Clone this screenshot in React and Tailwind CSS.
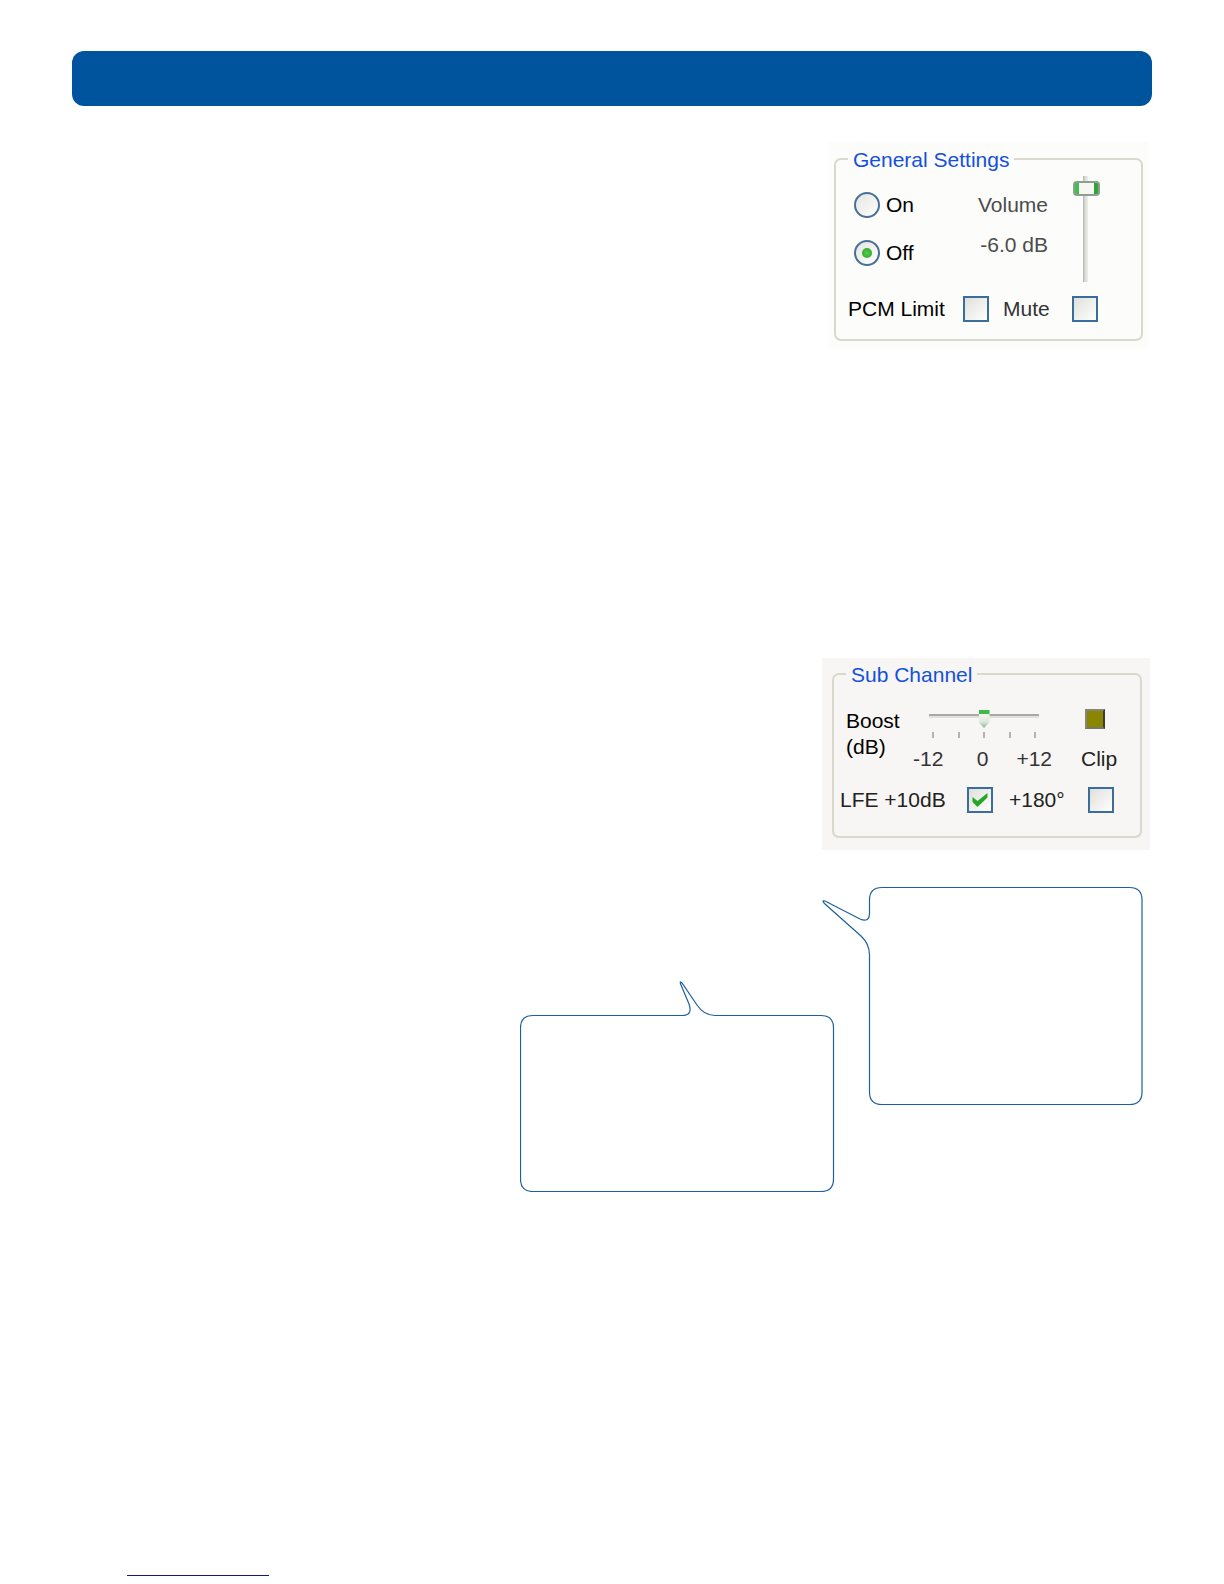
import { useState } from "react";

const TICKS = ["-12", "-6", "0", "+6", "+12"];

function GroupBox({ title, className, children }) {
  return (
    <fieldset className={`min-w-0 rounded-[7px] border-2 border-[#dad8cd] ${className}`}>
      <legend className="ml-[12px] px-[5px] pt-[2px] leading-6 text-[#1450dc]">{title}</legend>
      {children}
    </fieldset>
  );
}

function Radio({ id, label, checked, onChange }) {
  return (
    <div className="flex h-6 items-center gap-[6px]">
      <span className="grid place-items-center">
        <input
          id={id}
          type="radio"
          name="power"
          checked={checked}
          onChange={onChange}
          className="peer col-start-1 row-start-1 size-[26px] appearance-none rounded-full border-2 border-[#47709b] bg-linear-to-br from-[#e4e4df] to-white"
        />
        <span className="pointer-events-none col-start-1 row-start-1 hidden size-[10px] rounded-full bg-radial from-[#4fd04a] to-[#2a9c2a] peer-checked:block" />
      </span>
      <label htmlFor={id}>{label}</label>
    </div>
  );
}

function CheckBox({ id, checked, onChange }) {
  return (
    <span className="grid size-[26px] place-items-center">
      <input
        id={id}
        type="checkbox"
        checked={checked}
        onChange={onChange}
        className="peer col-start-1 row-start-1 size-[26px] appearance-none border-2 border-[#3a6c9c] bg-linear-to-br from-[#dfdfda] to-white"
      />
      <svg
        viewBox="0 0 16 16"
        className="pointer-events-none col-start-1 row-start-1 hidden size-4 peer-checked:block"
        aria-hidden
      >
        <path d="M0.5 5 L5.5 9 L15.5 1 V5.5 L5.5 15 L0.5 10 Z" fill="#27a527" />
      </svg>
    </span>
  );
}

function GeneralSettings() {
  const [power, setPower] = useState("off");
  const [volume, setVolume] = useState(95);
  const [limit, setLimit] = useState(false);
  const [mute, setMute] = useState(false);

  return (
    <section className="mr-[3px] w-[321px] bg-[#fcfcfb] px-[6px] pt-[4px] pb-[7px]">
      <GroupBox title="General Settings" className="pb-[17px]">
        <div className="flex pt-[4px] pr-[41px] pl-[18px]">
          <div className="flex flex-col gap-6 pt-[17px]">
            <Radio id="on" label="On" checked={power === "on"} onChange={() => setPower("on")} />
            <Radio id="off" label="Off" checked={power === "off"} onChange={() => setPower("off")} />
          </div>
          <div className="ml-auto flex flex-col gap-4 pt-[17px] text-right text-[#4c4c4c]">
            <label htmlFor="volume">Volume</label>
            <output htmlFor="volume">-6.0 dB</output>
          </div>
          <input
            id="volume"
            type="range"
            value={volume}
            onChange={(e) => setVolume(Number(e.target.value))}
            className="ml-[25px] h-[106px] w-[27px] appearance-none bg-transparent [direction:rtl] [writing-mode:vertical-lr] [&::-webkit-slider-runnable-track]:h-full [&::-webkit-slider-runnable-track]:bg-[linear-gradient(to_right,transparent_10px,#b5b5b0_10px,#d8d8d4_12px,#eeeeea_15px,transparent_15px)] [&::-webkit-slider-thumb]:h-[15px] [&::-webkit-slider-thumb]:w-[27px] [&::-webkit-slider-thumb]:appearance-none [&::-webkit-slider-thumb]:rounded-[4px] [&::-webkit-slider-thumb]:border-2 [&::-webkit-slider-thumb]:border-[#8c9f90] [&::-webkit-slider-thumb]:bg-[linear-gradient(to_right,#43bd4c_4px,#f6f6f3_4px,#f6f6f3_19px,#2fa23a_19px)]"
          />
        </div>
        <div className="grid grid-cols-[115px_40px_69px_26px] items-center pt-[14px] pl-[12px]">
          <label htmlFor="limit">PCM Limit</label>
          <CheckBox id="limit" checked={limit} onChange={() => setLimit(!limit)} />
          <label htmlFor="mute" className="text-[#333333]">Mute</label>
          <CheckBox id="mute" checked={mute} onChange={() => setMute(!mute)} />
        </div>
      </GroupBox>
    </section>
  );
}

function SubChannel() {
  const [boost, setBoost] = useState(0);
  const [lfe, setLfe] = useState(true);
  const [phase, setPhase] = useState(false);

  return (
    <section className="mt-[310px] mr-[2px] w-[328px] bg-[#f7f6f4] pt-[3px] pr-[8px] pb-[12px] pl-[10px]">
      <GroupBox title="Sub Channel" className="pb-[23px]">
        <div className="flex pt-[21px] pl-[12px]">
          <label htmlFor="boost" className="w-[67px] leading-[26px]">
            Boost
            <br />
            (dB)
          </label>
          <div className="w-[142px]">
            <input
              id="boost"
              type="range"
              min="-12"
              max="12"
              value={boost}
              onChange={(e) => setBoost(Number(e.target.value))}
              className="ml-[16px] block h-[20px] w-[110px] appearance-none bg-transparent [&::-webkit-slider-runnable-track]:h-[20px] [&::-webkit-slider-runnable-track]:bg-[linear-gradient(to_bottom,transparent_6px,#a9a9a4_6px,#a9a9a4_8px,#e0e0dc_8px,#e0e0dc_10px,transparent_10px)] [&::-webkit-slider-thumb]:h-[20px] [&::-webkit-slider-thumb]:w-[11px] [&::-webkit-slider-thumb]:appearance-none [&::-webkit-slider-thumb]:bg-[linear-gradient(to_bottom,#3fb94a_6px,#f4f5f1_6px,#dce8da_14px,#7eb58b_20px)] [&::-webkit-slider-thumb]:[clip-path:polygon(0_10%,100%_10%,100%_70%,50%_100%,0_70%)]"
            />
            <div className="mt-[4px] ml-[19px] flex w-[104px] justify-between">
              {TICKS.map((tick) => (
                <span key={tick} className="h-[6px] w-[2px] bg-[#b4b3ae]" />
              ))}
            </div>
            <div className="mt-[9px] grid grid-cols-[1fr_auto_1fr] pr-[3px] text-[#333333]">
              <span>-12</span>
              <span>0</span>
              <span className="text-right">+12</span>
            </div>
          </div>
          <div className="ml-[26px] flex flex-col pt-[1px] text-[#222222]">
            <span className="ml-[4px] size-[20px] border-2 border-t-[#85857c] border-r-[#3c3c34] border-b-[#77776c] border-l-[#85857c] bg-[#8a8600]" />
            <span className="mt-[18px]">Clip</span>
          </div>
        </div>
        <div className="grid grid-cols-[127px_42px_79px_26px] items-center pt-[16px] pl-[6px] text-[#222222]">
          <label htmlFor="lfe">LFE +10dB</label>
          <CheckBox id="lfe" checked={lfe} onChange={() => setLfe(!lfe)} />
          <label htmlFor="phase">+180°</label>
          <CheckBox id="phase" checked={phase} onChange={() => setPhase(!phase)} />
        </div>
      </GroupBox>
    </section>
  );
}

function Callouts() {
  return (
    <svg
      width="623"
      height="306"
      viewBox="0 0 623 306"
      className="mt-[36px] mr-[9px]"
      fill="none"
      stroke="#1d609f"
      strokeWidth="1.2"
      aria-hidden
    >
      <path d="M362 1.5 H609.5 Q622 1.5 622 14 V206 Q622 218.5 609.5 218.5 H362 Q349.5 218.5 349.5 206 V69 Q349.5 58 341 50 L305 18 Q301 14 305 15 L340 33 Q349.5 37 349.5 27 V14 Q349.5 1.5 362 1.5 Z" />
      <path d="M13 129.5 H162 Q173 129.5 169 118 L161 99 Q159 94 162 97 L177 119 Q184 129.5 195 129.5 H301 Q313.5 129.5 313.5 142 V293 Q313.5 305.5 301 305.5 H13 Q0.5 305.5 0.5 293 V142 Q0.5 129.5 13 129.5 Z" />
    </svg>
  );
}

export default function App() {
  return (
    <div className="bg-white px-[72px] pt-[51px] pb-[8px] font-['Liberation_Sans',Arial,sans-serif] text-[21px] leading-6 text-black">
      <header className="h-[55px] rounded-[12px] bg-[#00549d]" />
      <main className="flex flex-col items-end pt-[36px]">
        <GeneralSettings />
        <SubChannel />
        <Callouts />
      </main>
      <footer className="mt-[383px] pl-[55px]">
        <a href="#" aria-label="Website" className="block w-[142px] border-b border-[#17177f]" />
      </footer>
    </div>
  );
}
